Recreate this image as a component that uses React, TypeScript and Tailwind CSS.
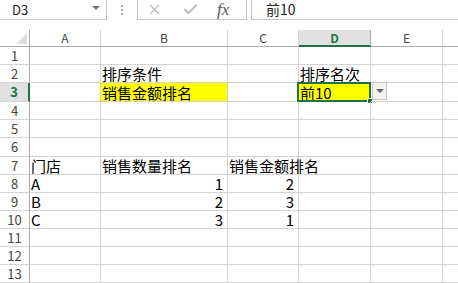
import { X, Check } from "lucide-react";

const font = { fontFamily: "'Noto Sans CJK SC', sans-serif" };

type Cell = { text?: string; align?: "left" | "right"; yellow?: boolean };

const cols = [
  { name: "A", cls: "w-[71px]" },
  { name: "B", cls: "w-[127px]" },
  { name: "C", cls: "w-[71px]" },
  { name: "D", cls: "w-[72px]" },
  { name: "E", cls: "w-[72px]" },
  { name: "", cls: "w-[71px]" },
];

const rowHeights = [
  "h-[18px]",
  "h-[18px]",
  "h-[19px]",
  "h-[18px]",
  "h-[18px]",
  "h-[19px]",
  "h-[18px]",
  "h-[18px]",
  "h-[18px]",
  "h-[18px]",
  "h-[18px]",
  "h-[18px]",
  "h-[18px]",
];

const data: Record<number, Record<number, Cell>> = {
  2: { 1: { text: "排序条件" }, 3: { text: "排序名次" } },
  3: { 1: { text: "销售金额排名", yellow: true }, 3: { text: "前10", yellow: true } },
  7: { 0: { text: "门店" }, 1: { text: "销售数量排名" }, 2: { text: "销售金额排名" } },
  8: { 0: { text: "A" }, 1: { text: "1", align: "right" }, 2: { text: "2", align: "right" } },
  9: { 0: { text: "B" }, 1: { text: "2", align: "right" }, 2: { text: "3", align: "right" } },
  10: { 0: { text: "C" }, 1: { text: "3", align: "right" }, 2: { text: "1", align: "right" } },
};

const FormulaBar = () => (
  <div className="flex h-[20px] items-stretch">
    <div className="w-[107px] border-b border-r border-[#c6c6c6] flex items-center justify-between pl-[12px] pr-[6px]">
      <span className="text-[13px] text-[#222]">D3</span>
      <span className="w-0 h-0 border-l-[4px] border-r-[4px] border-t-[4px] border-l-transparent border-r-transparent border-t-[#777] mb-[3px]" />
    </div>
    <div className="w-[30px] flex flex-col items-center justify-center gap-[2px]">
      <span className="w-[2px] h-[2px] bg-[#aaa]" />
      <span className="w-[2px] h-[2px] bg-[#aaa]" />
      <span className="w-[2px] h-[2px] bg-[#aaa]" />
    </div>
    <div className="w-[110px] border-b border-l border-r border-[#c6c6c6] flex items-center pl-[8px]">
      <X size={17} strokeWidth={1.6} className="text-[#b8b8b8]" />
      <Check size={17} strokeWidth={2.6} className="text-[#b8b8b8] ml-[19px]" />
      <span
        className="ml-[18px] text-[17px] italic text-[#555] leading-none"
        style={{ fontFamily: "'Liberation Serif', serif" }}
      >
        fx
      </span>
    </div>
    <div className="w-[4px]" />
    <div className="flex-1 border-b border-l border-[#c6c6c6] flex items-center pl-[14px]">
      <span className="text-[14px] text-[#222]">前10</span>
    </div>
  </div>
);

const HeaderRow = () => (
  <div className="flex h-[17px]">
    <div className="w-[30px] shrink-0 border-r border-b border-[#ababab] relative">
      <span className="absolute right-[2px] bottom-[2px] w-0 h-0 border-b-[11px] border-l-[11px] border-b-[#dfdfdf] border-l-transparent" />
    </div>
    {cols.map((c, i) =>
      c.name === "D" ? (
        <div
          key={i}
          className={`${c.cls} shrink-0 bg-[#e1e1e1] border-r border-[#ababab] border-b-2 border-b-[#217346] flex items-center justify-center text-[12px] font-bold text-[#217346]`}
        >
          {c.name}
        </div>
      ) : (
        <div
          key={i}
          className={`${c.cls} shrink-0 border-r border-b border-[#ababab] border-r-[#d4d4d4] flex items-center justify-center text-[12px] text-[#444]`}
        >
          {c.name}
        </div>
      )
    )}
  </div>
);

const DataRow = ({ n, h }: { n: number; h: string }) => {
  const row = data[n] || {};
  const active = n === 3;
  return (
    <div className={`flex ${h}`}>
      <div
        className={
          active
            ? "w-[30px] shrink-0 bg-[#e1e1e1] border-r-2 border-r-[#217346] border-b border-b-[#d4d4d4] flex items-center justify-center text-[13px] font-bold text-[#217346]"
            : "w-[30px] shrink-0 border-r border-r-[#ababab] border-b border-b-[#d4d4d4] flex items-center justify-center text-[13px] text-[#444]"
        }
      >
        {n}
      </div>
      {cols.map((c, ci) => {
        const cell = row[ci];
        const isSel = active && ci === 3;
        return (
          <div
            key={ci}
            className={`${c.cls} shrink-0 relative border-r border-b border-[#d4d4d4] flex items-end whitespace-nowrap text-[15px] leading-[17px] text-black ${
              cell?.yellow ? "bg-[#ffff00]" : ""
            } ${cell?.align === "right" ? "justify-end pr-[4px]" : "pl-[1px]"}`}
          >
            {cell?.text}
            {isSel && (
              <>
                <span className="absolute -left-[2px] -top-[1px] -right-[1px] -bottom-[1px] border-2 border-[#217346]" />
                <span className="absolute -right-[3px] -bottom-[3px] w-[6px] h-[6px] bg-[#217346] border border-white" />
                <span className="absolute -right-[17px] -top-[1px] w-[15px] h-[18px] bg-[#f3f3f3] border border-[#c6c6c6] flex items-center justify-center">
                  <span className="w-0 h-0 border-l-[4px] border-r-[4px] border-t-[4px] border-l-transparent border-r-transparent border-t-[#666]" />
                </span>
              </>
            )}
          </div>
        );
      })}
    </div>
  );
};

export default function App() {
  return (
    <div className="w-[458px] h-[283px] overflow-hidden bg-white" style={font}>
      <FormulaBar />
      <div className="h-[10px]" />
      <HeaderRow />
      {rowHeights.map((h, i) => (
        <DataRow key={i} n={i + 1} h={h} />
      ))}
    </div>
  );
}
